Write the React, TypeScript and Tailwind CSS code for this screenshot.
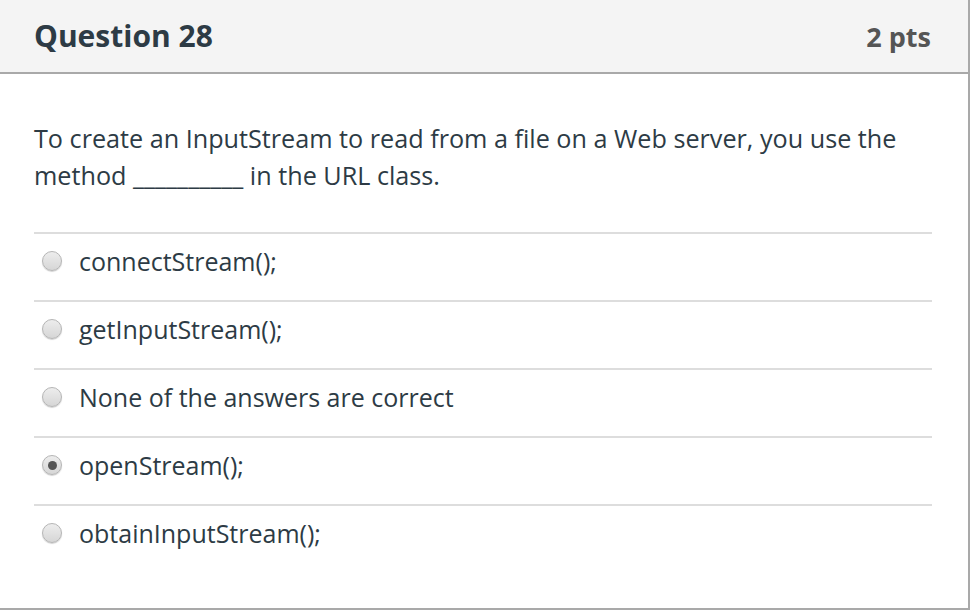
import React from "react";

const answers = [
  { id: 1, label: "connectStream();", checked: false },
  { id: 2, label: "getInputStream();", checked: false },
  { id: 3, label: "None of the answers are correct", checked: false },
  { id: 4, label: "openStream();", checked: true },
  { id: 5, label: "obtainInputStream();", checked: false },
];

const Radio = ({ checked }: { checked: boolean }) => (
  <div className="w-5 h-5 rounded-full border border-[#b5b5b5] bg-gradient-to-b from-[#ededed] to-[#d6d6d6] shadow-[0_1px_1px_rgba(0,0,0,0.18)] flex items-center justify-center shrink-0">
    {checked && <div className="w-[9px] h-[9px] rounded-full bg-[#555555]" />}
  </div>
);

const App = () => {
  return (
    <div className="w-[972px] h-[610px] bg-white font-['Open_Sans',sans-serif] text-[#2d3b45]">
      <div className="w-[970px] h-[610px] border-r-2 border-b-2 border-[#a9a9a9] flex flex-col">
        <div className="h-[74px] shrink-0 bg-[#f4f4f4] border-b-2 border-[#a9a9a9] flex items-center justify-between pl-[34px] pr-[37px]">
          <h2 className="text-[30px] font-bold text-[#2d3b45] leading-none">Question 28</h2>
          <span className="text-[27px] font-bold text-[#555555] leading-none">2 pts</span>
        </div>

        <div className="pl-[34px] pr-[36px]">
          <p className="mt-[46px] mb-[38px] text-[25.2px] leading-[37px]">
            To create an InputStream to read from a file on a Web server, you use the method __________ in the URL class.
          </p>

          <div>
            {answers.map((a) => (
              <div key={a.id} className="h-[68px] border-t-2 border-[#dddddd] flex items-center gap-[17px] pl-[8px] pb-[12px]">
                <Radio checked={a.checked} />
                <span className="text-[25px] leading-[30px]">{a.label}</span>
              </div>
            ))}
          </div>
        </div>
      </div>
    </div>
  );
};

export default App;
